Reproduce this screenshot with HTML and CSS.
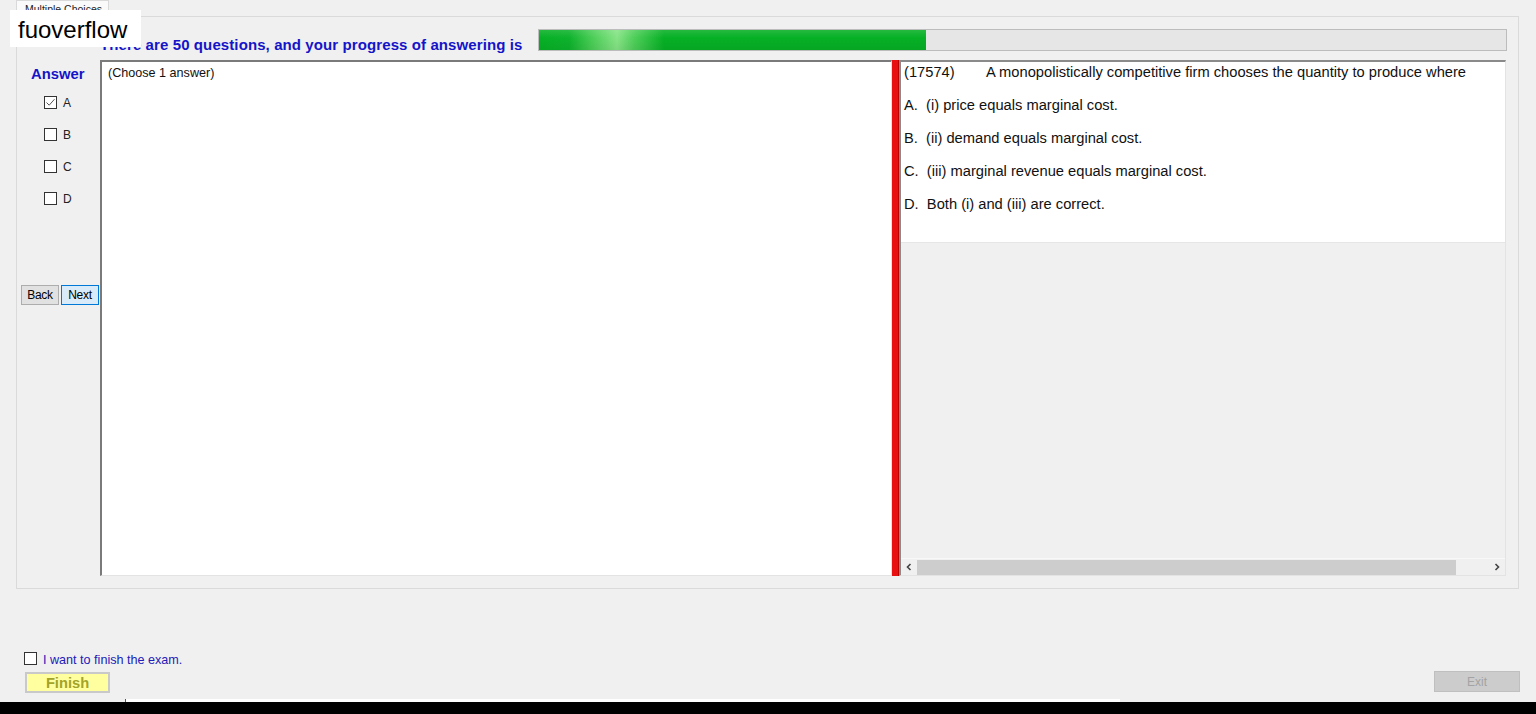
FILE: index.html
```html
<!DOCTYPE html>
<html lang="en">
  <head>
    <meta charset="UTF-8" />
    <meta name="viewport" content="width=device-width, initial-scale=1.0" />
    <title>Multiple Choices</title>
    <link rel="stylesheet" href="styles.css">
  </head>
  <body>
    <div class="window">
      <div class="brand">fuoverflow</div>

      <div class="tabs">
        <div class="tabs__tab">Multiple Choices</div>
      </div>

      <section class="panel">
        <div class="progress-row">
          <p class="progress-row__text">There are 50 questions, and your progress of answering is</p>
          <div class="progress">
            <div class="progress__fill" style="width: 40%"></div>
          </div>
        </div>

        <div class="exam">
          <aside class="answers">
            <p class="answers__title">Answer</p>
            <ul class="answers__list">
              <li class="answers__item">
                <span class="check check--on">
                  <svg viewBox="0 0 11 11" width="11" height="11"><path d="M1.5 5.5 L4.2 8.2 L9.5 2.2" fill="none" stroke="#555" stroke-width="1"/></svg>
                </span>
                <span class="answers__label">A</span>
              </li>
              <li class="answers__item"><span class="check"></span><span class="answers__label">B</span></li>
              <li class="answers__item"><span class="check"></span><span class="answers__label">C</span></li>
              <li class="answers__item"><span class="check"></span><span class="answers__label">D</span></li>
            </ul>
            <div class="answers__nav">
              <button class="btn">Back</button>
              <button class="btn btn--focus">Next</button>
            </div>
          </aside>

          <div class="notes">(Choose 1 answer)</div>

          <div class="splitter"></div>

          <div class="question">
            <div class="question__body">
              <p class="question__line"><span class="question__id">(17574)</span>A monopolistically competitive firm chooses the quantity to produce where</p>
              <p class="question__line">A.&nbsp; (i) price equals marginal cost.</p>
              <p class="question__line">B.&nbsp; (ii) demand equals marginal cost.</p>
              <p class="question__line">C.&nbsp; (iii) marginal revenue equals marginal cost.</p>
              <p class="question__line">D.&nbsp; Both (i) and (iii) are correct.</p>
            </div>
            <div class="question__fill"></div>
            <div class="hscroll">
              <span class="hscroll__arrow">
                <svg viewBox="0 0 8 8" width="8" height="8"><path d="M5.5 1 L2.5 4 L5.5 7" fill="none" stroke="#444" stroke-width="1.6"/></svg>
              </span>
              <div class="hscroll__track"><div class="hscroll__thumb"></div></div>
              <span class="hscroll__arrow">
                <svg viewBox="0 0 8 8" width="8" height="8"><path d="M2.5 1 L5.5 4 L2.5 7" fill="none" stroke="#444" stroke-width="1.6"/></svg>
              </span>
            </div>
          </div>
        </div>
      </section>

      <footer class="footer">
        <label class="footer__confirm">
          <span class="check"></span>
          <span class="footer__confirm-text">I want to finish the exam.</span>
        </label>
        <div class="footer__actions">
          <button class="btn-finish">Finish</button>
          <button class="btn-exit" disabled>Exit</button>
        </div>
      </footer>

      <div class="taskbar">
        <div class="taskbar__strip"></div>
        <div class="taskbar__bar"></div>
      </div>
    </div>
  </body>
</html>
```

FILE: styles.css
```css
*,
*::before,
*::after {
  padding: 0;
  margin: 0;
  box-sizing: border-box;
  font-family: "Liberation Sans", Arial, sans-serif;
}

body {
  background-color: #f0f0f0;
  overflow: hidden;
}

.window {
  position: relative;
  width: 1536px;
  height: 714px;
  display: flex;
  flex-direction: column;
  background-color: #f0f0f0;
}

/* watermark box over the top-left corner */
.brand {
  position: absolute;
  top: 10px;
  left: 10px;
  width: 131px;
  height: 37px;
  padding: 3px 0 0 8px;
  background-color: #fff;
  color: #000;
  font-size: 24px;
  line-height: 34px;
  z-index: 5;
}

/* tab strip */
.tabs {
  height: 16px;
  padding-left: 16px;
  display: flex;
}

.tabs__tab {
  width: 93px;
  height: 17px;
  padding: 1px 0 0 8px;
  background-color: #fafafa;
  border: 1px solid #d9d9d9;
  border-bottom: none;
  font-size: 10.5px;
  line-height: 14px;
  color: #222;
}

.panel {
  height: 573px;
  margin: 0 17px 0 16px;
  border: 1px solid #dadada;
  display: flex;
  flex-direction: column;
}

/* progress header */
.progress-row {
  height: 43px;
  display: flex;
  align-items: flex-start;
  gap: 16px;
  padding: 12px 11px 0 83px;
}

.progress-row__text {
  margin-top: 7px;
  color: #1414c8;
  font-size: 15px;
  font-weight: 700;
  letter-spacing: 0.1px;
  line-height: 17px;
  white-space: nowrap;
}

.progress {
  flex: 1;
  height: 22px;
  background-color: #e6e6e6;
  border: 1px solid #bcbcbc;
}

.progress__fill {
  height: 100%;
  background:
    linear-gradient(to bottom, rgba(255, 255, 255, 0.12), rgba(0, 0, 0, 0) 40%, rgba(0, 0, 0, 0.06)),
    linear-gradient(to right, #06b025 0, #0db22c 30px, #4fcf5a 55px, #86e486 78px, #4fcf5a 95px, #06b025 125px, #06b025 100%);
}

/* main exam area */
.exam {
  height: 516px;
  display: flex;
}

.answers {
  width: 83px;
  padding-top: 7px;
  display: flex;
  flex-direction: column;
}

.answers__title {
  color: #1414c8;
  font-size: 14.8px;
  font-weight: 700;
  line-height: 15px;
  padding-left: 14px;
}

.answers__list {
  list-style: none;
  margin-top: 14px;
  padding-left: 27px;
  display: flex;
  flex-direction: column;
  gap: 19px;
}

.answers__item {
  height: 13px;
  display: flex;
  align-items: center;
  gap: 6px;
}

.answers__label {
  font-size: 12px;
  color: #222;
}

.check {
  width: 13px;
  height: 13px;
  flex-shrink: 0;
  border: 1px solid #333;
  background-color: #fff;
  display: flex;
  align-items: center;
  justify-content: center;
}

.answers__nav {
  margin-top: 80px;
  padding-left: 4px;
  display: flex;
  gap: 2px;
}

.btn {
  width: 38px;
  height: 20px;
  background-color: #e1e1e1;
  border: 1px solid #adadad;
  font-size: 12px;
  letter-spacing: -0.3px;
  color: #000;
}

.btn--focus {
  background-color: #d9ebf9;
  border-color: #0078d7;
}

.notes {
  width: 792px;
  background-color: #fff;
  border-top: 2px solid #7a7a7a;
  border-left: 2px solid #7a7a7a;
  border-right: 1px solid #e3e3e3;
  border-bottom: 1px solid #e3e3e3;
  padding: 4px 6px;
  font-size: 12.6px;
  line-height: 15px;
  color: #111;
}

.splitter {
  width: 7px;
  background-color: #e81010;
  border-right: 1px solid #b00;
}

.question {
  width: 607px;
  display: flex;
  flex-direction: column;
  border-top: 2px solid #8a8a8a;
  border-left: 2px solid #8a8a8a;
  border-right: 1px solid #e3e3e3;
  border-bottom: 1px solid #e3e3e3;
}

.question__body {
  height: 181px;
  background-color: #fff;
  padding: 2px 0 0 3px;
  border-bottom: 1px solid #e6e6e6;
}

.question__line {
  font-size: 14.7px;
  line-height: 16px;
  margin-bottom: 17px;
  color: #111;
  white-space: nowrap;
}

.question__id {
  display: inline-block;
  width: 82px;
}

.question__fill {
  flex: 1;
  background-color: #f0f0f0;
}

.hscroll {
  height: 17px;
  display: flex;
  align-items: center;
  background-color: #f0f0f0;
  border-top: 1px solid #f8f8f8;
}

.hscroll__arrow {
  width: 16px;
  height: 15px;
  display: flex;
  align-items: center;
  justify-content: center;
}

.hscroll__track {
  flex: 1;
  height: 15px;
  padding-right: 33px;
  display: flex;
}

.hscroll__thumb {
  flex: 1;
  background-color: #cdcdcd;
}

/* finish area */
.footer {
  padding: 63px 16px 0 24px;
  display: flex;
  flex-direction: column;
}

.footer__confirm {
  display: flex;
  align-items: center;
  gap: 6px;
  height: 13px;
}

.footer__confirm-text {
  font-size: 12.6px;
  color: #2020b8;
  margin-top: 3px;
}

.footer__actions {
  margin-top: 6px;
  display: flex;
  justify-content: space-between;
  align-items: flex-start;
}

.btn-finish {
  margin-left: 1px;
  width: 85px;
  height: 21px;
  margin-top: 1px;
  background-color: #ffffa0;
  border: 2px solid #c9c9c9;
  color: #a3a328;
  font-size: 14.7px;
  font-weight: 700;
}

.btn-exit {
  width: 86px;
  height: 21px;
  background-color: #cccccc;
  border: 1px solid #bfbfbf;
  color: #a3a3a3;
  font-size: 12px;
}

.taskbar {
  margin-top: auto;
}

.taskbar__strip {
  height: 3px;
  margin: 0 416px 0 125px;
  background-color: #fff;
  border-left: 1px solid #555;
}

.taskbar__bar {
  height: 12px;
  background-color: #000;
}
```
